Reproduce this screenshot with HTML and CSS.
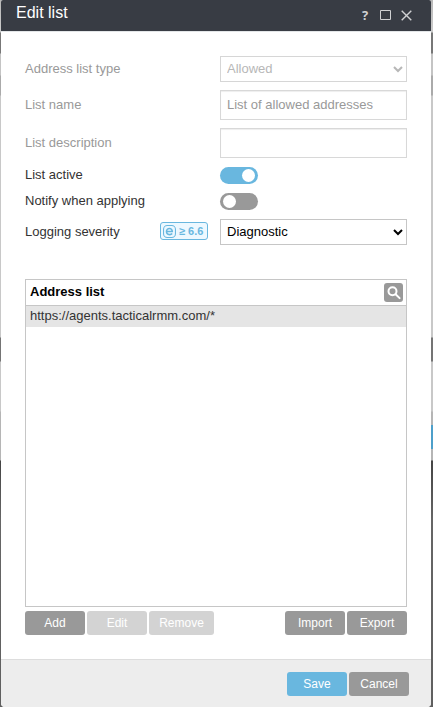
FILE: index.html
```html
<!DOCTYPE html>
<html lang="en">
<head>
<meta charset="utf-8">
<title>Edit list</title>
<link rel="stylesheet" href="styles.css">
</head>
<body>
<section class="dialog">
  <header class="titlebar">
    <h1>Edit list</h1>
    <div class="tools">
      <span class="help">?</span>
      <svg class="maximize" viewBox="0 0 11 11"><path d="M.5 .5h10v9H.5z"/></svg>
      <svg class="close" viewBox="0 0 11 11"><path d="M.7 .7l9.6 9.6M10.3 .7L.7 10.3"/></svg>
    </div>
  </header>
  <main class="content">
    <div class="form">
      <div class="row row-type"><label class="muted" for="type">Address list type</label><select id="type" disabled><option>Allowed</option></select></div>
      <div class="row row-input"><label class="muted" for="name">List name</label><input id="name" type="text" value="List of allowed addresses" disabled></div>
      <div class="row row-input"><label class="muted" for="desc">List description</label><input id="desc" type="text" disabled></div>
      <div class="row row-toggle"><label>List active</label><span class="toggle on"></span></div>
      <div class="row row-toggle"><label>Notify when applying</label><span class="toggle"></span></div>
      <div class="row row-severity">
        <label for="severity">Logging severity</label>
        <span class="version">
          <svg viewBox="0 0 12 12"><rect x=".5" y=".5" width="11" height="11" rx="3.5"/><path class="letter" d="M3.2 6h5.4C8.6 2.3 3.2 2.3 3.2 6c0 3.2 3.9 3.5 5.3 1.9"/></svg>
          <span>≥ 6.6</span>
        </span>
        <select id="severity"><option>Diagnostic</option></select>
      </div>
    </div>
    <div class="list">
      <div class="list-head">
        <span>Address list</span>
        <span class="search"><svg viewBox="0 0 19 19"><circle cx="8.5" cy="8.2" r="4"/><path d="M11.6 11.2l4 3.9"/></svg></span>
      </div>
      <div class="list-item">https://agents.tacticalrmm.com/*</div>
    </div>
    <div class="actions">
      <span class="button">Add</span>
      <span class="button off">Edit</span>
      <span class="button off wide">Remove</span>
      <span class="button push">Import</span>
      <span class="button">Export</span>
    </div>
  </main>
  <footer class="footer">
    <span class="button primary">Save</span>
    <span class="button">Cancel</span>
  </footer>
</section>
</body>
</html>
```
FILE: styles.css
```css
* { box-sizing: border-box; }
html, body { margin: 0; height: 100%; }
body {
  overflow: hidden;
  padding: 0 2px 0 1px;
  font: 13px/16px "Liberation Sans", Arial, sans-serif;
  color: #333;
  background:
    linear-gradient(#4d9fca 0 0) 100% 425px / 2px 24px no-repeat,
    linear-gradient(#b8b8b8 0, #ccc 32px, #777 33px, #777 53px, #c4c4c4 54px, #c4c4c4 75px, #aaa 76px, #aaa 95px, #c8c8c8 96px, #c8c8c8 337px, #747474 338px, #747474 361px, #c8c8c8 362px, #c8c8c8 411px, #b5b5b5 412px, #b5b5b5 460px, #444 461px, #666 520px, #5f5f5f 707px);
}
.dialog {
  display: flex;
  flex-direction: column;
  height: 707px;
  overflow: hidden;
  background: #fff;
  border-radius: 2px 2px 4px 4px;
}
.titlebar {
  display: flex;
  flex: none;
  justify-content: space-between;
  height: 32px;
  padding: 0 19px 0 15px;
  background: #383c44;
  border-bottom: 1px solid #e3e6e8;
}
.titlebar h1 { margin: 3px 0 0; font-size: 16px; line-height: 20px; font-weight: 400; color: #fff; }
.tools { display: flex; padding-top: 10px; color: #d0d1d3; }
.tools svg { width: 11px; height: 11px; fill: none; stroke: currentColor; }
.help { width: 8px; margin: -3px 10px 0 0; font: bold 13px/16px "Open Sans", sans-serif; }
.maximize { margin-right: 10px; }
.close { stroke-width: 1.4; }

.content { flex: 1; padding: 24px 24px 0; }
.form { display: flex; flex-direction: column; height: 223px; }
.row { display: flex; justify-content: space-between; flex: none; }
.row label { margin-top: 5px; }
.row .muted { color: #999; }
select, input {
  width: 187px;
  height: 26px;
  margin: 0;
  border: 1px solid #c6c6c6;
  border-radius: 0;
  background: #fff;
  font: 13px "Liberation Sans", Arial, sans-serif;
  color: #000;
}
select { padding: 0 0 1px 2px; }
#type { border-color: #c6c6c6; opacity: .7; color: #999; }
input { height: 30px; padding: 0 6px 2px; box-shadow: inset 0 1px 1px #eee; }
input:disabled { border-color: #d8d8d8; background: #fff; color: #999; }
.row-type { height: 34px; }
.row-input { height: 38px; }
.row-input label { margin-top: 7px; }
.row-toggle { height: 26px; }
.row-toggle:nth-child(4) { margin-top: 1px; }
.row-toggle label { margin-top: 0; }
.toggle { display: flex; width: 38px; height: 17px; margin-right: 149px; padding: 2px 3px; border-radius: 9px; background: #999; }
.toggle::before { content: ""; width: 13px; height: 13px; border-radius: 50%; background: #fff; }
.toggle.on { justify-content: flex-end; background: #69b7df; }
.row-severity select { flex: none; }
.version {
  display: flex;
  align-items: center;
  gap: 3px;
  width: 48px;
  height: 18px;
  margin: 3px 12px 0 auto;
  padding-left: 2px;
  border: 1px solid #69b7df;
  border-radius: 3px;
  background: #edf8ff;
  color: #69b7df;
  font-size: 11px;
  font-weight: bold;
  white-space: nowrap;
}
.version svg { flex: none; width: 13px; height: 13px; fill: none; stroke: currentColor; }
.version .letter { stroke-width: 1.4; }

.list { height: 328px; border: 1px solid #c6c6c6; }
.list-head { display: flex; justify-content: space-between; height: 26px; padding: 4px 3px 0 4px; border-bottom: 1px solid #c6c6c6; font-weight: bold; color: #000; }
.search { width: 19px; height: 19px; margin-top: -1px; border-radius: 3px; background: #999; }
.search svg { display: block; fill: none; stroke: #fff; stroke-width: 2; stroke-linecap: round; }
.list-item { height: 21px; padding: 2px 4px; background: #e5e5e5; }
.actions { display: flex; gap: 2px; margin-top: 4px; }
.button { width: 60px; height: 24px; border-radius: 3px; background: #999; color: #fff; font-size: 12px; line-height: 24px; text-align: center; }
.button.off { background: #d3d3d3; }
.button.wide { width: 65px; }
.button.push { margin-left: auto; }
.button.primary { background: #69b7df; }
.footer { display: flex; flex: none; justify-content: flex-end; gap: 2px; height: 48px; padding: 12px 22px 0 0; border-top: 1px solid #ddd; background: #ededed; }
```
